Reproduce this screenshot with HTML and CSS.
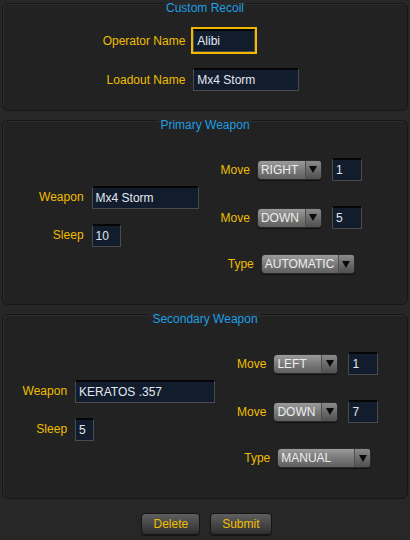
FILE: index.html
```html
<!DOCTYPE html>
<html lang="en">
<head>
<meta charset="utf-8">
<title>Custom Recoil</title>
<link rel="stylesheet" href="styles.css">
</head>
<body>
<div class="page">
  <section class="panel panel-recoil">
    <div class="panel-title">Custom Recoil</div>
    <div class="name-grid">
      <label class="label">Operator Name</label>
      <input class="field field-focus field-operator" value="Alibi">
      <label class="label">Loadout Name</label>
      <input class="field field-loadout" value="Mx4 Storm">
    </div>
  </section>

  <section class="panel panel-weapon">
    <div class="panel-title">Primary Weapon</div>
    <div class="weapon-body">
      <div class="weapon-left">
        <label class="label">Weapon</label>
        <input class="field field-weapon-primary" value="Mx4 Storm">
        <label class="label">Sleep</label>
        <input class="field field-sleep-primary" value="10">
      </div>
      <div class="weapon-right">
        <div class="move-row">
          <span class="label">Move</span>
          <div class="select select-move"><span class="select-value">RIGHT</span><span class="select-arrow"><svg width="8" height="7" viewBox="0 0 8 7"><path d="M0 0H8L4 7Z" fill="#0a0a0a"/></svg></span></div>
          <input class="field field-num" value="1">
        </div>
        <div class="move-row">
          <span class="label">Move</span>
          <div class="select select-move"><span class="select-value">DOWN</span><span class="select-arrow"><svg width="8" height="7" viewBox="0 0 8 7"><path d="M0 0H8L4 7Z" fill="#0a0a0a"/></svg></span></div>
          <input class="field field-num" value="5">
        </div>
        <div class="move-row">
          <span class="label">Type</span>
          <div class="select select-type"><span class="select-value">AUTOMATIC</span><span class="select-arrow"><svg width="8" height="7" viewBox="0 0 8 7"><path d="M0 0H8L4 7Z" fill="#0a0a0a"/></svg></span></div>
        </div>
      </div>
    </div>
  </section>

  <section class="panel panel-weapon">
    <div class="panel-title">Secondary Weapon</div>
    <div class="weapon-body">
      <div class="weapon-left">
        <label class="label">Weapon</label>
        <input class="field field-weapon-secondary" value="KERATOS .357">
        <label class="label">Sleep</label>
        <input class="field field-sleep-secondary" value="5">
      </div>
      <div class="weapon-right">
        <div class="move-row">
          <span class="label">Move</span>
          <div class="select select-move"><span class="select-value">LEFT</span><span class="select-arrow"><svg width="8" height="7" viewBox="0 0 8 7"><path d="M0 0H8L4 7Z" fill="#0a0a0a"/></svg></span></div>
          <input class="field field-num" value="1">
        </div>
        <div class="move-row">
          <span class="label">Move</span>
          <div class="select select-move"><span class="select-value">DOWN</span><span class="select-arrow"><svg width="8" height="7" viewBox="0 0 8 7"><path d="M0 0H8L4 7Z" fill="#0a0a0a"/></svg></span></div>
          <input class="field field-num" value="7">
        </div>
        <div class="move-row">
          <span class="label">Type</span>
          <div class="select select-type"><span class="select-value">MANUAL</span><span class="select-arrow"><svg width="8" height="7" viewBox="0 0 8 7"><path d="M0 0H8L4 7Z" fill="#0a0a0a"/></svg></span></div>
        </div>
      </div>
    </div>
  </section>

  <div class="actions">
    <button class="btn btn-delete">Delete</button>
    <button class="btn btn-submit">Submit</button>
  </div>
</div>
</body>
</html>
```

FILE: styles.css
```css
html, body {
  margin: 0;
  padding: 0;
  background: #272727;
}

body {
  font-family: "Liberation Sans", Arial, sans-serif;
  font-size: 12px;
  line-height: 14px;
  color: #f0be00;
  width: 410px;
  height: 540px;
  overflow: hidden;
}

.page {
  padding-top: 3px;
}

.panel {
  margin: 0 2px;
  border: 1px solid #171717;
  border-radius: 6px;
  background: #222222;
  box-shadow: inset 1px 1px 0 rgba(255, 255, 255, 0.05);
}

.panel + .panel {
  margin-top: 9px;
}

.panel-recoil {
  padding-bottom: 19px;
}

.panel-weapon {
  padding-bottom: 30px;
}

.panel-title {
  width: fit-content;
  margin: -3px auto 0;
  padding: 0 2px;
  line-height: 14px;
  color: #1f9fe4;
  background: linear-gradient(to bottom, #272727 3px, transparent 3px);
}

.label {
  color: #f0be00;
  white-space: nowrap;
}

.field {
  box-sizing: border-box;
  height: 23px;
  margin: 0;
  padding: 0 3px;
  border: 1px solid #4b4b4b;
  border-top: 2px solid #060606;
  background: #111c2d;
  color: #e2e8ef;
  font-family: "Liberation Sans", Arial, sans-serif;
  font-size: 12px;
  outline: none;
}

.field-focus {
  outline: 2px solid #f2b800;
}

.name-grid {
  display: grid;
  grid-template-columns: auto auto;
  justify-content: center;
  align-items: center;
  column-gap: 8px;
  row-gap: 16px;
  margin-top: 14px;
  padding-right: 8px;
}

.name-grid .label,
.weapon-left .label {
  justify-self: end;
}

.name-grid .field,
.weapon-left .field {
  justify-self: start;
}

.field-operator { width: 62px; }
.field-loadout { width: 106px; }
.field-weapon-primary { width: 107px; }
.field-sleep-primary { width: 29px; }
.field-weapon-secondary { width: 140px; }
.field-sleep-secondary { width: 19px; }
.field-num { width: 30px; }

.weapon-body {
  display: flex;
  justify-content: center;
  align-items: center;
  gap: 22px;
  margin-top: 26px;
  padding-right: 9px;
}

.weapon-left {
  display: grid;
  grid-template-columns: auto auto;
  align-items: center;
  column-gap: 8px;
  row-gap: 15px;
}

.weapon-right {
  display: flex;
  flex-direction: column;
  align-items: center;
  gap: 25px;
}

.move-row {
  display: flex;
  align-items: center;
}

.move-row .label {
  margin-right: 7px;
}

.move-row .select {
  margin-right: 10px;
}

.move-row .select-type {
  margin-right: 0;
}

.select {
  box-sizing: border-box;
  display: flex;
  height: 20px;
  border: 1px solid #2a2a2a;
  border-radius: 4px;
  background: linear-gradient(to bottom, #9b9b9b 0%, #7d7d7d 45%, #5f5f5f 100%);
  box-shadow: 0 1px 1px rgba(0, 0, 0, 0.5);
  overflow: hidden;
}

.select-move { width: 65px; }
.select-type { width: 94px; }

.select-value {
  flex: 1;
  padding-left: 3px;
  line-height: 18px;
  color: #ededed;
  white-space: nowrap;
}

.select-arrow {
  width: 15px;
  display: flex;
  align-items: center;
  justify-content: center;
  border-left: 1px solid #4e4e4e;
  background: linear-gradient(to bottom, #8a8a8a 0%, #6c6c6c 50%, #4f4f4f 100%);
}

.select-arrow svg {
  display: block;
}

.actions {
  display: flex;
  justify-content: center;
  gap: 10px;
  margin-top: 14px;
  padding-left: 3px;
}

.btn {
  box-sizing: border-box;
  height: 22px;
  padding: 0 11px;
  border: 1px solid #161616;
  border-radius: 4px;
  background: linear-gradient(to bottom, #5e5e5e 0%, #474747 50%, #2f2f2f 100%);
  box-shadow: 0 1px 1px rgba(0, 0, 0, 0.5);
  color: #f0be00;
  font-family: "Liberation Sans", Arial, sans-serif;
  font-size: 12px;
  line-height: 20px;
  cursor: pointer;
}
```
